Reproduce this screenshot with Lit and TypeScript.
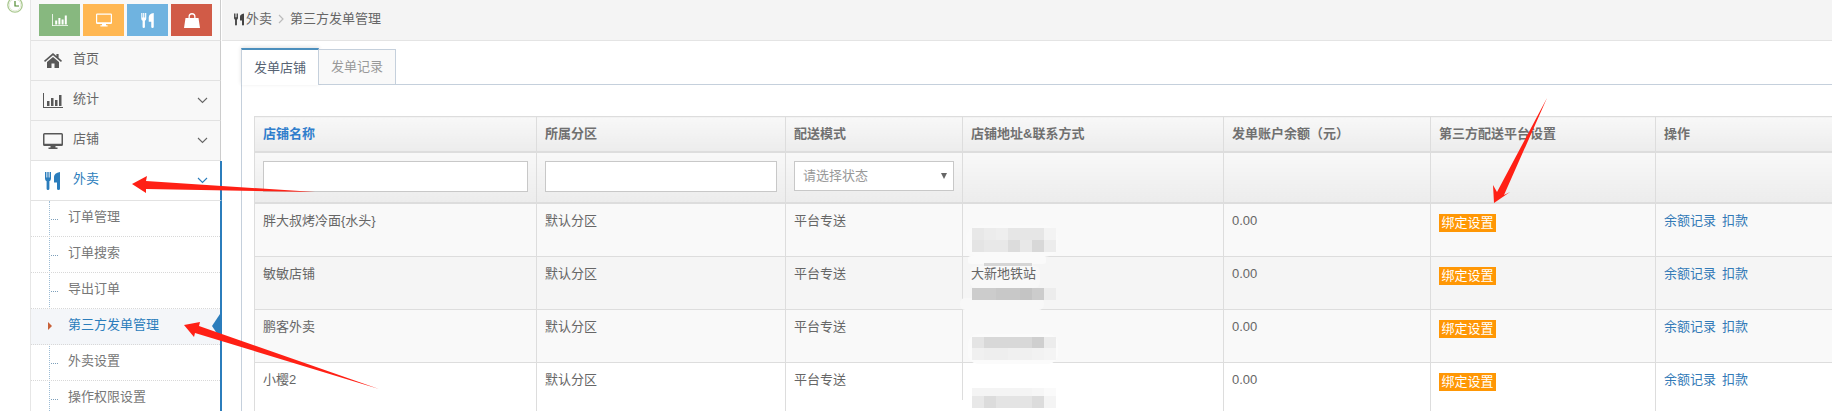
import { LitElement, html, css, svg } from "lit";
import { customElement } from "lit/decorators.js";

const chevron = html`<svg class="chev" width="11" height="7" viewBox="0 0 11 7"><polyline points="1,1 5.5,5.5 10,1" fill="none" stroke="currentColor" stroke-width="1.1"/></svg>`;

const home = html`<svg class="ic" width="18" height="15" viewBox="0 0 18 15"><path fill="currentColor" d="M9 0 L12.4 2.9 V1 H14.6 V4.8 L18 7.7 L17 8.9 L9 2.2 L1 8.9 L0 7.7 Z M3 9 L9 4 L15 9 V15 H10.5 V10.5 H7.5 V15 H3 Z"/></svg>`;
const bars = (w: number, h: number) => html`<svg class="ic" width=${w} height=${h} viewBox="0 0 20 15"><path fill="currentColor" d="M0 0 H1 V14 H20 V15 H0 Z M4 8 H6.5 V13 H4 Z M8 5 H10.5 V13 H8 Z M12 7 H14.5 V13 H12 Z M16 2 H18.5 V13 H16 Z"/></svg>`;
const desktop = (w: number, h: number) => html`<svg class="ic" width=${w} height=${h} viewBox="0 0 20 16"><path fill="currentColor" fill-rule="evenodd" d="M1.5 0 H18.5 A1.5 1.5 0 0 1 20 1.5 V11.5 A1.5 1.5 0 0 1 18.5 13 H12.5 V14.5 H14.5 V16 H5.5 V14.5 H7.5 V13 H1.5 A1.5 1.5 0 0 1 0 11.5 V1.5 A1.5 1.5 0 0 1 1.5 0 Z M1.5 1.5 V10.8 H18.5 V1.5 Z"/></svg>`;
const cutlery = (w: number, h: number) => html`<svg class="ic" width=${w} height=${h} viewBox="0 0 15 18"><path fill="currentColor" d="M0 0 H1.4 V5.5 H2.3 V0 H3.7 V5.5 H4.6 V0 H6 V6.5 Q6 8.6 4.4 9.3 V16.8 A1.4 1.2 0 0 1 1.6 16.8 V9.3 Q0 8.6 0 6.5 Z M15 0 V16.8 A1.5 1.2 0 0 1 12 16.8 V10.5 H9 V5 Q9 1 15 0 Z"/></svg>`;
const bag = html`<svg class="ic" width="16" height="15" viewBox="0 0 16 15"><path fill="currentColor" fill-rule="evenodd" d="M1.5 5 H4.5 V3.6 A3.5 3.5 0 0 1 11.5 3.6 V5 H14.5 L16 15 H0 Z M5.8 5 H10.2 V3.6 A2.2 2.2 0 0 0 5.8 3.6 Z"/></svg>`;

const mosaics: [number, number, string[]][] = [
  [228, 12, ["e8e8e8", "ececec", "eeeeee", "e6e6e6", "e6e6e6", "e6e6e6", "f3f3f3"]],
  [240, 12, ["e4e4e4", "e8e8e8", "e8e8e8", "dcdcdc", "e8e8e8", "d8d8d8", "ececec"]],
  [288, 12, ["cccccc", "cccccc", "c8c8c8", "c8c8c8", "c4c4c4", "cccccc", "ececec"]],
  [337, 11, ["e4e4e4", "d8d8d8", "d8d8d8", "d8d8d8", "d8d8d8", "cfcfcf", "ececec"]],
  [348, 12, ["f0f0f0", "eeeeee", "eeeeee", "f0f0f0", "f0f0f0", "f2f2f2", "f4f4f4"]],
  [388, 8, ["f4f4f4", "f4f4f4", "f4f4f4", "f4f4f4", "f4f4f4", "f6f6f6", "fafafa"]],
  [396, 12, ["e8e8e8", "dcdcdc", "e4e4e4", "e4e4e4", "e4e4e4", "dcdcdc", "f4f4f4"]],
];

const nav = [
  { label: "统计", icon: bars(20, 15) },
  { label: "店铺", icon: desktop(20, 16) },
];
const subs = ["订单管理", "订单搜索", "导出订单", "第三方发单管理", "外卖设置", "操作权限设置"];
const rows = [
  { name: "胖大叔烤冷面{水头}", addr: "" },
  { name: "敏敏店铺", addr: "大新地铁站" },
  { name: "鹏客外卖", addr: "" },
  { name: "小樱2", addr: "" },
];

@customElement("app-root")
export class AppRoot extends LitElement {
  static styles = css`
    :host {
      display: flex;
      width: 1832px;
      height: 411px;
      overflow: hidden;
      position: relative;
      background: #fff;
      font-family: "Liberation Sans", "Noto Sans CJK SC", sans-serif;
      font-size: 13px;
      color: #666;
    }
    .rail { width: 30px; flex: none; }
    .rail svg { display: block; }
    .side {
      width: 191px;
      flex: none;
      box-sizing: border-box;
      border-left: 1px solid #e6e6e6;
      background: #f8f8f8;
      display: flex;
      flex-direction: column;
    }
    .short {
      height: 41px;
      flex: none;
      box-sizing: border-box;
      padding: 4px 0 0 8px;
      display: flex;
      gap: 3px;
      border-bottom: 1px solid #e2e2e2;
      border-right: 1px solid #ccc;
    }
    .short span {
      width: 41px;
      height: 32px;
      display: flex;
      align-items: center;
      justify-content: center;
      color: #fff;
    }
    .g { background: #87b87f; }
    .y { background: #ffb752; }
    .b { background: #6fb3e0; }
    .r { background: #d15b47; }
    .item {
      height: 40px;
      flex: none;
      box-sizing: border-box;
      display: flex;
      align-items: center;
      border-bottom: 1px solid #e2e2e2;
      border-right: 1px solid #ccc;
      color: #585858;
      position: relative;
    }
    .item .slot { width: 42px; display: flex; justify-content: center; padding-left: 1px; box-sizing: border-box; }
    .item .txt { flex: 1; color: #666; line-height: 18px; margin-top: -4px; }
    .chev { margin-right: 12px; color: #666; }
    .item.open {
      background: #fff;
      color: #2b7dbc;
      border-right: 2px solid #2b7dbc;
      margin-right: -1px;
    }
    .item.open .txt, .item.open .chev { color: #2b7dbc; }
    .subs {
      flex: none;
      height: 216px;
      background: #fff;
      border-right: 2px solid #2b7dbc;
      margin-right: -1px;
      position: relative;
    }
    .subs::before {
      content: "";
      position: absolute;
      left: 18px;
      top: 0;
      bottom: 0;
      border-left: 1px dotted #9dbdd6;
    }
    .sub {
      height: 36px;
      box-sizing: border-box;
      border-bottom: 1px dotted #d8d8d8;
      padding: 0 0 3px 37px;
      display: flex;
      align-items: center;
      position: relative;
      line-height: 18px;
      color: #777;
    }
    .sub::before {
      content: "";
      position: absolute;
      left: 20px;
      width: 7px;
      top: 18px;
      border-top: 1px dotted #7d9fba;
    }
    .sub.on { background: #f4f6f9; color: #2b7dbc; }
    .sub.on::before {
      left: 17px;
      top: 13px;
      width: 0;
      border: 0;
      border-left: 4px solid #c86139;
      border-top: 4px solid transparent;
      border-bottom: 4px solid transparent;
    }
    .sub.on::after {
      content: "";
      position: absolute;
      right: 0;
      top: 5px;
      width: 0;
      height: 0;
      border-right: 8px solid #2b7dbc;
      border-top: 12px solid transparent;
      border-bottom: 12px solid transparent;
    }
    .main { flex: 1; min-width: 0; display: flex; flex-direction: column; }
    .crumb {
      height: 41px;
      flex: none;
      box-sizing: border-box;
      background: #f4f4f4;
      border-bottom: 1px solid #e4e4e4;
      display: flex;
      align-items: center;
      padding: 0 0 2px 12px;
      color: #666;
      line-height: 18px;
      margin-left: 1px;
    }
    .crumb .ic { color: #444; margin-right: 2px; }
    .crumb svg.sep { margin: 0 6px 0 6px; color: #bbb; }
    .body { padding: 8px 0 0 20px; flex: 1; min-height: 0; }
    .tabs { display: flex; align-items: flex-end; height: 36px; border-bottom: 1px solid #c5d0dc; box-sizing: border-box; }
    .tab {
      width: 77px;
      height: 35px;
      box-sizing: border-box;
      border: 1px solid #c5d0dc;
      border-left: 0;
      border-bottom: 0;
      background: #f9f9f9;
      color: #999;
      display: flex;
      align-items: center;
      justify-content: center;
      line-height: 18px;
    }
    .tab.on {
      width: 78px;
      background: #fff;
      border-top: 2px solid #4c8fbd;
      border-left: 1px solid #c5d0dc;
      color: #576373;
      margin-bottom: -1px;
      height: 37px;
      box-shadow: 0 -1px 4px rgba(0, 0, 0, 0.12);
    }
    .pane {
      border-left: 1px solid #c5d0dc;
      padding: 31px 0 0 12px;
      height: 400px;
      box-sizing: border-box;
    }
    table {
      border-collapse: collapse;
      table-layout: fixed;
      width: 1901px;
      color: #666;
    }
    col:nth-child(1) { width: 282px; }
    col:nth-child(2) { width: 249px; }
    col:nth-child(3) { width: 177px; }
    col:nth-child(4) { width: 261px; }
    col:nth-child(5) { width: 207px; }
    col:nth-child(6) { width: 225px; }
    th, td { border: 1px solid #ddd; padding: 0 8px; text-align: left; vertical-align: top; line-height: 20px; font-weight: normal; }
    thead th { background: linear-gradient(#f8f8f8, #ececec); }
    .head th { padding-top: 7px; padding-bottom: 7px; font-weight: 700; color: #707070; border-bottom: 2px solid #ddd; box-sizing: border-box; height: 35px; }
    .head th.sort { color: #307ecc; }
    .filter th { height: 51px; box-sizing: border-box; padding-top: 8px; padding-bottom: 8px; border-bottom: 2px solid #ddd; }
    input {
      display: block;
      width: 100%;
      height: 31px;
      box-sizing: border-box;
      border: 1px solid #c8c8c8;
      background: #fff;
      padding: 0;
    }
    .select {
      height: 30px;
      box-sizing: border-box;
      border: 1px solid #c8c8c8;
      background: #fff;
      color: #999;
      display: flex;
      align-items: center;
      justify-content: space-between;
      padding: 0 6px 0 8px;
      font-size: 13px;
      font-weight: normal;
    }
    .arrow { width: 0; height: 0; border-left: 3px solid transparent; border-right: 3px solid transparent; border-top: 6px solid #666; }
    tbody td { height: 53px; box-sizing: border-box; padding-top: 7px; padding-bottom: 0; }
    tbody tr:nth-child(1) td { background: #f9f9f9; }
    tbody tr:nth-child(2) td { background: #f5f5f5; }
    tbody tr:nth-child(3) td { background: #f9f9f9; }
    tbody tr:nth-child(4) td { background: #fff; }
    .addr { position: relative; z-index: 2; }
    .badge {
      display: inline-block;
      width: 57px;
      height: 18px;
      line-height: 17px;
      background: #ff9705;
      color: #fff;
      text-align: center;
      vertical-align: top;
      margin-top: 3px;
    }
    .link { color: #337ab7; margin-right: 6px; }
    .overlay { position: absolute; left: 0; top: 0; pointer-events: none; z-index: 1; }
  `;

  render() {
    return html`
      <div class="rail">
        <svg width="30" height="16" viewBox="0 0 30 16">
          <circle cx="15" cy="5" r="7.2" fill="#fff" stroke="#a9c88f" stroke-width="1.3"/>
          <circle cx="15" cy="5" r="5.8" fill="none" stroke="#dfe9d2" stroke-width="0.8"/>
          <polyline points="15,1 15,6 19,6" fill="none" stroke="#4f8a2f" stroke-width="1.2"/>
        </svg>
      </div>
      <div class="side">
        <div class="short">
          <span class="g">${bars(16, 12)}</span>
          <span class="y">${desktop(16, 14)}</span>
          <span class="b">${cutlery(13, 15)}</span>
          <span class="r">${bag}</span>
        </div>
        <div class="item"><span class="slot">${home}</span><span class="txt">首页</span></div>
        ${nav.map((n) => html`<div class="item"><span class="slot">${n.icon}</span><span class="txt">${n.label}</span>${chevron}</div>`)}
        <div class="item open"><span class="slot">${cutlery(15, 18)}</span><span class="txt">外卖</span>${chevron}</div>
        <div class="subs">
          ${subs.map((s, i) => html`<div class="sub ${i === 3 ? "on" : ""}">${s}</div>`)}
        </div>
      </div>
      <div class="main">
        <div class="crumb">
          ${cutlery(10, 13)}<span>外卖</span>
          <svg class="sep" width="6" height="10" viewBox="0 0 6 10"><polyline points="1,1 5,5 1,9" fill="none" stroke="currentColor" stroke-width="1.2"/></svg>
          <span>第三方发单管理</span>
        </div>
        <div class="body">
          <div class="tabs">
            <div class="tab on">发单店铺</div>
            <div class="tab">发单记录</div>
          </div>
          <div class="pane">
            <table>
              <colgroup><col /><col /><col /><col /><col /><col /><col /></colgroup>
              <thead>
                <tr class="head">
                  <th class="sort">店铺名称</th><th>所属分区</th><th>配送模式</th><th>店铺地址&联系方式</th><th>发单账户余额（元）</th><th>第三方配送平台设置</th><th>操作</th>
                </tr>
                <tr class="filter">
                  <th><input /></th><th><input /></th>
                  <th><div class="select"><span>请选择状态</span><i class="arrow"></i></div></th>
                  <th></th><th></th><th></th><th></th>
                </tr>
              </thead>
              <tbody>
                ${rows.map((r) => html`<tr>
                  <td>${r.name}</td><td>默认分区</td><td>平台专送</td><td><span class="addr">${r.addr}</span></td><td>0.00</td>
                  <td><span class="badge">绑定设置</span></td>
                  <td><span class="link">余额记录</span><span class="link">扣款</span></td>
                </tr>`)}
              </tbody>
            </table>
          </div>
        </div>
      </div>
      <svg class="overlay" width="1832" height="411" viewBox="0 0 1832 411">
        <g>
          <rect x="966" y="225" width="92" height="32" rx="14" fill="#fafafa"/>
          <rect x="968" y="256" width="78" height="8" rx="3" fill="#fafafa"/>
          <rect x="984" y="263" width="48" height="3" fill="#d6d6d6"/>
          <rect x="970" y="266" width="70" height="22" rx="6" fill="#f8f8f8"/>
          <rect x="960" y="298" width="84" height="12" rx="5" fill="#f8f8f8"/>
          <rect x="968" y="334" width="90" height="30" rx="10" fill="#fbfbfb"/>
          <rect x="958" y="400" width="100" height="11" rx="4" fill="#fff"/>
          <rect x="968" y="384" width="90" height="16" rx="4" fill="#fff"/>
        </g>
        ${mosaics.map(([y, h, cells]) => cells.map((c, i) => svg`<rect x=${972 + i * 12} y=${y} width="12" height=${h} fill="#${c}"/>`))}
        <g fill="#ff2015">
          <polygon points="132,184 147,176 146,181 315,192 146,189 146,193"/>
          <polygon points="184,325 200,322 199,326 379,389 195,333 194,337"/>
          <polygon points="1494,203 1493,185 1497,192 1547,98 1504,195 1510,192"/>
        </g>
      </svg>
    `;
  }
}
